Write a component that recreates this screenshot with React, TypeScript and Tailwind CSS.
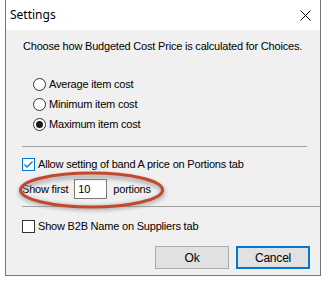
import { type ReactNode } from 'react';

function Radio({ checked, label }: { checked?: boolean; label: string }) {
  return (
    <div className="flex h-[20px] items-center pl-[27px]">
      <span className="flex h-[13px] w-[13px] items-center justify-center rounded-full border border-[#333] bg-white">
        {checked && <span className="h-[7px] w-[7px] rounded-full bg-[#1a1a1a]" />}
      </span>
      <span className="ml-[3px]">{label}</span>
    </div>
  );
}

function Check({ checked, children }: { checked?: boolean; children: ReactNode }) {
  return (
    <div className="flex h-[16px] items-center pl-[16px]">
      <span
        className={
          checked
            ? 'flex h-[13px] w-[13px] items-center justify-center border border-[#0078d7] bg-white'
            : 'flex h-[13px] w-[13px] items-center justify-center border border-[#333] bg-white'
        }
      >
        {checked && (
          <svg width="11" height="11" viewBox="0 0 11 11">
            <path d="M1.5 5.5 L4 8 L9.5 2.5" fill="none" stroke="#0078d7" strokeWidth="1.4" />
          </svg>
        )}
      </span>
      <span className="ml-[3px]">{children}</span>
    </div>
  );
}

export default function App() {
  return (
    <div className="h-[284px] w-[329px] bg-white pl-[5px] text-[11px] tracking-[-0.2px] text-black [font-family:'Liberation_Sans',Arial,sans-serif]">
      <div className="relative flex h-[276px] w-[316px] flex-col border-x border-b border-[#777] bg-[#f0f0f0]">
        <div className="flex h-[30px] items-center justify-between bg-white pl-[4px] pr-[9px]">
          <span className="text-[12px] tracking-normal [font-family:'Noto_Sans',sans-serif]">Settings</span>
          <svg width="11" height="11" viewBox="0 0 11 11">
            <path d="M0.5 0.5 L10.5 10.5 M10.5 0.5 L0.5 10.5" stroke="#000" strokeWidth="1" />
          </svg>
        </div>

        <div className="mt-[8px] flex h-[16px] items-center pl-[17px]">
          Choose how Budgeted Cost Price is calculated for Choices.
        </div>

        <div className="mt-[20px]">
          <Radio label="Average item cost" />
          <Radio label="Minimum item cost" />
          <Radio checked label="Maximum item cost" />
        </div>

        <div className="ml-[16px] mt-[12px] h-px w-[285px] bg-[#a0a0a0]" />

        <div className="mt-[9px]">
          <Check checked>Allow setting of band A price on Portions tab</Check>
        </div>

        <div className="mt-[7px] flex h-[20px] items-center pl-[16px]">
          <span>Show first</span>
          <span className="ml-[6px] flex h-[20px] w-[33px] items-center border border-[#7a7a7a] bg-white pl-[3px]">
            10
          </span>
          <span className="ml-[6px]">portions</span>
        </div>

        <div className="ml-[16px] mt-[7px] h-px flex-none bg-[#a0a0a0]" />

        <div className="mt-[11px]">
          <Check>Show B2B Name on Suppliers tab</Check>
        </div>

        <div className="mt-[12px] flex justify-end gap-[7px] pr-[10px]">
          <button className="h-[23px] w-[74px] border border-[#adadad] bg-[#e1e1e1] text-[12px]">Ok</button>
          <button className="h-[23px] w-[74px] border-2 border-[#0078d7] bg-[#e1e1e1] text-[12px]">Cancel</button>
        </div>

        <svg
          className="pointer-events-none absolute left-[6px] top-[168px]"
          width="160"
          height="46"
          viewBox="0 0 160 46"
        >
          <defs>
            <filter id="sh" x="-10%" y="-30%" width="120%" height="160%">
              <feGaussianBlur stdDeviation="2" />
            </filter>
          </defs>
          <ellipse cx="80" cy="24" rx="71" ry="16" fill="none" stroke="#888" strokeWidth="4" opacity="0.7" filter="url(#sh)" />
          <ellipse cx="79.5" cy="22" rx="71" ry="17" fill="none" stroke="#c4492c" strokeWidth="3" />
        </svg>
      </div>
    </div>
  );
}
